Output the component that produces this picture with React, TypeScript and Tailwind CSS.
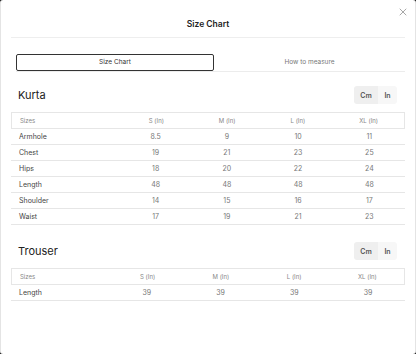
import { X } from "lucide-react";

const kurta = [
  ["Armhole", "8.5", "9", "10", "11"],
  ["Chest", "19", "21", "23", "25"],
  ["Hips", "18", "20", "22", "24"],
  ["Length", "48", "48", "48", "48"],
  ["Shoulder", "14", "15", "16", "17"],
  ["Waist", "17", "19", "21", "23"],
];

const trouser = [["Length", "39", "39", "39", "39"]];

const heads = ["S (In)", "M (In)", "L (In)", "XL (In)"];

function UnitToggle() {
  return (
    <div className="flex h-[18px] rounded-[3px] overflow-hidden text-[7px] leading-none font-semibold text-[#555]">
      <div className="w-[24px] flex items-center justify-center bg-[#efefef]">Cm</div>
      <div className="w-[19px] flex items-center justify-center bg-[#f7f7f7]">In</div>
    </div>
  );
}

function SizeTable({ title, rows, cols }: { title: string; rows: string[][]; cols: string }) {
  return (
    <section>
      <div className="flex items-center justify-between pl-[7px] pr-[8px]">
        <h2 className="text-[11px] leading-none text-[#222]">{title}</h2>
        <UnitToggle />
      </div>
      <div className="mt-[8px]">
        <div className={`grid ${cols} h-[17px] items-center border border-[#e6e6e6] text-[6px] leading-none text-[#888]`}>
          <div className="pl-[8px]">Sizes</div>
          {heads.map((h) => (
            <div key={h} className="text-center">{h}</div>
          ))}
        </div>
        {rows.map((r) => (
          <div key={r[0]} className={`grid ${cols} h-[16px] items-center border-b border-[#e6e6e6] text-[7px] leading-none`}>
            <div className="pl-[8px] text-[#444]">{r[0]}</div>
            {r.slice(1).map((v, i) => (
              <div key={i} className="text-center text-[#777]">{v}</div>
            ))}
          </div>
        ))}
      </div>
    </section>
  );
}

export default function App() {
  return (
    <div className="w-[416px] h-[354px] bg-[#1c1c1c] font-['Inter',sans-serif]">
      <div className="relative w-full h-full bg-white rounded-[3px] border-x border-[#e4e4e4] px-[10px]">
        <button className="absolute right-[6px] top-[6px] text-[#777]">
          <X className="w-[12px] h-[12px]" strokeWidth={1.3} />
        </button>

        <div className="h-[38px] flex items-end justify-center pb-[9px] border-b border-[#eeeeee]">
          <h1 className="text-[8.5px] leading-none font-semibold text-[#222]">Size Chart</h1>
        </div>

        <div className="mt-[16px] ml-[5px] flex border-b border-[#ececec]">
          <div className="w-[198px] h-[17px] flex items-center justify-center border-[1.5px] border-[#333] rounded-[2px] text-[6.5px] leading-none text-[#333]">
            Size Chart
          </div>
          <div className="flex-1 h-[17px] flex items-center justify-center text-[6.5px] leading-none text-[#777]">
            How to measure
          </div>
        </div>

        <div className="mt-[14px] flex flex-col gap-[17px]">
          <SizeTable title="Kurta" rows={kurta} cols="grid-cols-[109px_1fr_1fr_1fr_1fr]" />
          <SizeTable title="Trouser" rows={trouser} cols="grid-cols-[99px_1fr_1fr_1fr_1fr]" />
        </div>
      </div>
    </div>
  );
}
